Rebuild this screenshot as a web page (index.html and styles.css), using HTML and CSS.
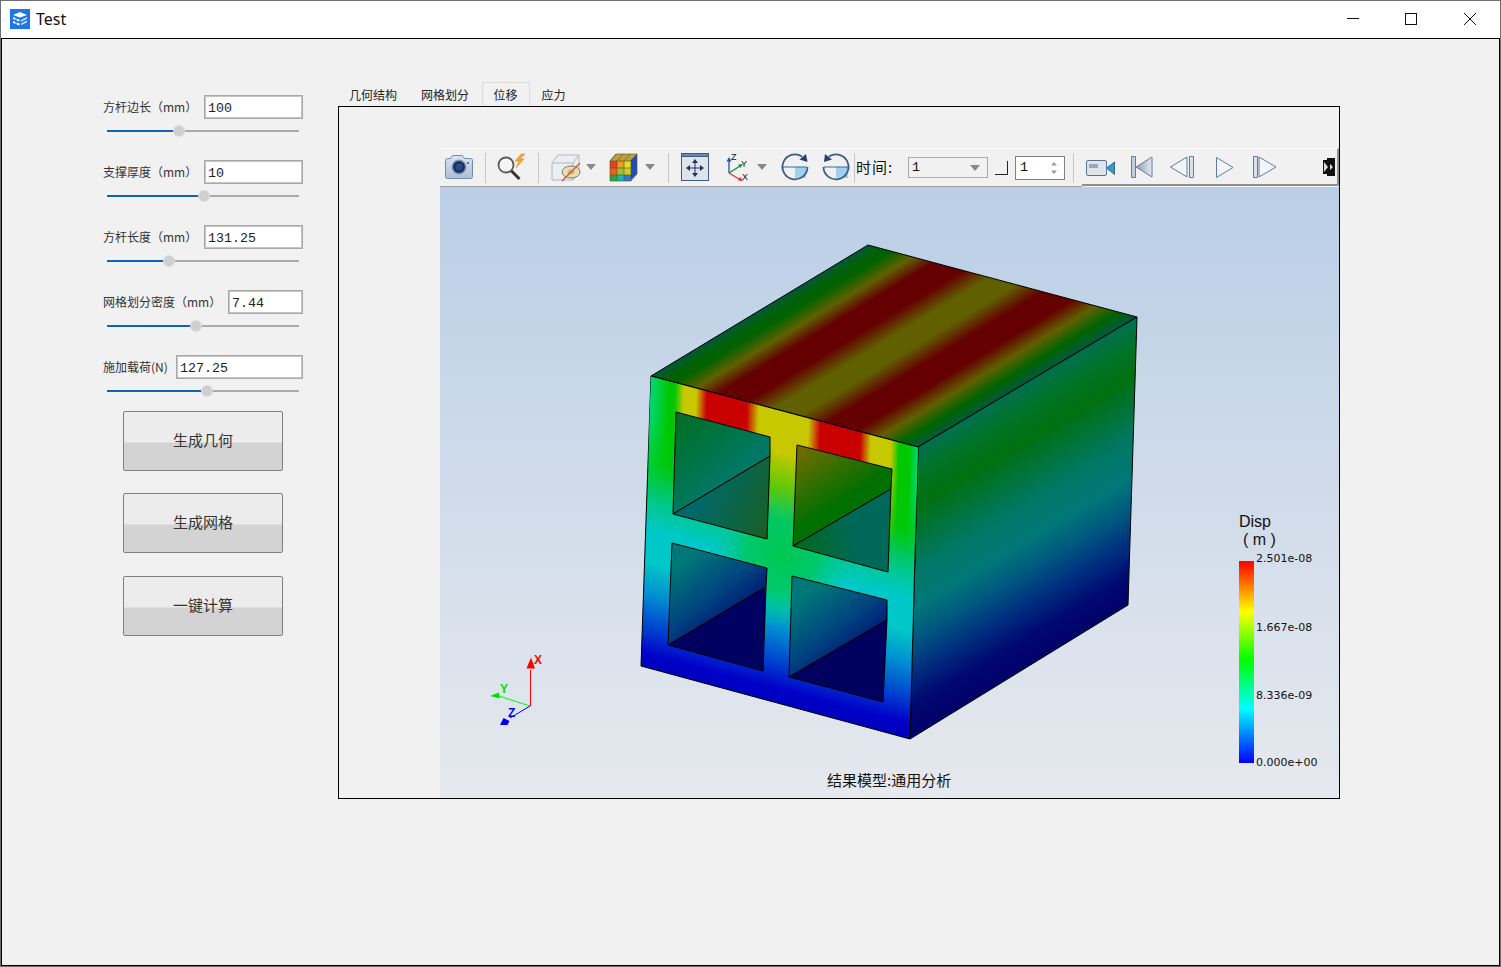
FILE: index.html
```html
<!DOCTYPE html>
<html lang="zh">
<head>
<meta charset="utf-8">
<title>Test</title>
<link rel="stylesheet" href="styles.css">
</head>
<body>
<div class="window">
  <header class="titlebar">
    <svg class="app-icon" width="20" height="20" viewBox="0 0 20 20">
      <rect width="20" height="20" fill="#1c78e6"/>
      <path d="M3 6l7-3 7 3-7 2.500z" fill="#fff"/>
      <path d="M3 8l2.500 1v2L3 10zM3 12l2.500 1v2L3 14zM6.500 9.500l3 1v2l-3-1zM6.500 13.500l3 1v2l-3-1z" fill="#fff"/>
      <path d="M11 11l6-3v1.800l-6 3zM11 14.500l6-3v1.800l-6 3z" fill="#cfe3fb"/>
    </svg>
    <span class="app-title">Test</span>
    <div class="win-controls">
      <svg width="171" height="37" viewBox="1329 1 171 37" fill="none" stroke="#111" stroke-width="1">
        <path d="M1347 18.500h12"/>
        <rect x="1405.500" y="13.500" width="11" height="11"/>
        <path d="M1464 13l12 12M1476 13l-12 12"/>
      </svg>
    </div>
  </header>
  <div class="client">
    <aside class="side">
      <div class="param">
        <div class="field"><label class="lbl lbl-m">方杆边长（mm）</label><input class="num" value="100"></div>
        <div class="slider"><div class="fill" style="width:72px"><span class="knob"></span></div></div>
      </div>
      <div class="param">
        <div class="field"><label class="lbl lbl-m">支撑厚度（mm）</label><input class="num" value="10"></div>
        <div class="slider"><div class="fill" style="width:97px"><span class="knob"></span></div></div>
      </div>
      <div class="param">
        <div class="field"><label class="lbl lbl-m">方杆长度（mm）</label><input class="num" value="131.25"></div>
        <div class="slider"><div class="fill" style="width:62px"><span class="knob"></span></div></div>
      </div>
      <div class="param">
        <div class="field"><label class="lbl lbl-l">网格划分密度（mm）</label><input class="num" value="7.44"></div>
        <div class="slider"><div class="fill" style="width:89px"><span class="knob"></span></div></div>
      </div>
      <div class="param param-last">
        <div class="field"><label class="lbl lbl-s">施加载荷(N)</label><input class="num" value="127.25"></div>
        <div class="slider"><div class="fill" style="width:100px"><span class="knob"></span></div></div>
      </div>
      <div class="actions">
        <button class="act">生成几何</button>
        <button class="act">生成网格</button>
        <button class="act act-last">一键计算</button>
      </div>
    </aside>
    <main class="main">
      <nav class="tabs">
        <span class="tab">几何结构</span>
        <span class="tab">网格划分</span>
        <span class="tab tab-on">位移</span>
        <span class="tab">应力</span>
      </nav>
      <section class="pane">
        <div class="toolbar">
          <div class="tb-main">
            <svg width="45" height="37" viewBox="440 149 45 37">
              <defs><linearGradient id="camb" x1="0" y1="0" x2="0" y2="1"><stop offset="0" stop-color="#dbe4ef"/><stop offset="1" stop-color="#aebfd4"/></linearGradient></defs>
              <path d="M445.500 160.500q0-2 2-2h3l2-3h10l2 3h6q2 0 2 2v16q0 2-2 2h-23q-2 0-2-2z" fill="url(#camb)" stroke="#6f8bad"/>
              <circle cx="459" cy="167" r="7.500" fill="#7d97b7"/>
              <circle cx="459" cy="167" r="6" fill="#1b2f5c"/>
              <circle cx="459" cy="167" r="3.500" fill="#2a4a85"/>
              <circle cx="468" cy="163" r="1" fill="#35507a"/>
            </svg>
            <i class="sep"></i>
            <svg width="52" height="37" viewBox="486 149 52 37">
              <circle cx="506" cy="165" r="7.500" fill="#f4f4f4" stroke="#5a5a5a" stroke-width="1.800"/>
              <path d="M511.500 171l8 8" stroke="#333" stroke-width="3"/>
              <path d="M521 154l-6 7h4l-3 7 8-9h-4l5-5z" fill="#f0a63a" stroke="#d98a20" stroke-width=".5"/>
            </svg>
            <i class="sep"></i>
            <svg width="62" height="37" viewBox="539 149 62 37">
              <path d="M552 163l6-8h21v17l-6 8h-21z" fill="#eceef1" stroke="#b3b6ba"/>
              <path d="M552 163h21l6-8M573 163v17" fill="none" stroke="#b3b6ba"/>
              <ellipse cx="571" cy="172" rx="9" ry="6" fill="#e8dfae" stroke="#777"/>
              <ellipse cx="571" cy="172" rx="3.500" ry="2.500" fill="#c6b978"/>
              <path d="M562 181l18-18" stroke="#d8552b" stroke-width="1.200"/>
              <path d="M586 164h10l-5 6z" fill="#888"/>
            </svg>
            <svg width="67" height="37" viewBox="601 149 67 37">
              <path d="M610 161l6-7h21l-6 7z" fill="#b7a23e"/>
              <path d="M630 161l7-7v20l-7 7z" fill="#1f4fb5"/>
              <rect x="610" y="161" width="7" height="7" fill="#e34222"/>
              <rect x="617" y="161" width="7" height="7" fill="#f09a1e"/>
              <rect x="624" y="161" width="7" height="7" fill="#e8d82e"/>
              <rect x="610" y="168" width="7" height="7" fill="#e8621f"/>
              <rect x="617" y="168" width="7" height="7" fill="#8cc63a"/>
              <rect x="624" y="168" width="7" height="7" fill="#c8d030"/>
              <rect x="610" y="175" width="7" height="6" fill="#25a650"/>
              <rect x="617" y="175" width="7" height="6" fill="#20b4b8"/>
              <rect x="624" y="175" width="7" height="6" fill="#2b78d8"/>
              <path d="M610 161h21v20h-21zM617 161v20M624 161v20M610 168h21M610 175h21M616 154l-6 7M623 154l-6 7M630 154l-6 7M610 161l6-7h21l-6 7M637 154v20l-6 7" fill="none" stroke="#5b4e1c" stroke-width=".6"/>
              <path d="M645 164h10l-5 6z" fill="#888"/>
            </svg>
            <i class="sep"></i>
            <svg width="101" height="37" viewBox="669 149 101 37">
              <rect x="681.500" y="153.500" width="27" height="27" fill="#dfe3ea" stroke="#3f5c86"/>
              <rect x="681.500" y="153.500" width="27" height="3" fill="#6f86a8" stroke="#3f5c86"/>
              <path d="M695 160v16M687 168h16" stroke="#1f3560" stroke-width="1"/>
              <path d="M695 159l-3 4h6zM695 177l-3-4h6zM686 168l4-3v6zM704 168l-4-3v6z" fill="#1f3560"/>
              <path d="M729 173v-13" stroke="#2a4ea8" stroke-width="1.300"/><path d="M729 157l-2.500 4.500h5z" fill="#2a4ea8"/>
              <path d="M729 173l11-7" stroke="#1e8a3c" stroke-width="1.300"/><path d="M743 164l-5 .5 2.300 3.600z" fill="#1e8a3c"/>
              <path d="M729 173l11 6.500" stroke="#e03030" stroke-width="1.300"/><path d="M743 181l-5-.5 2.300-3.600z" fill="#e03030"/>
              <text class="ax" x="731" y="160">Z</text><text class="ax" x="741" y="167">Y</text><text class="ax" x="742" y="180">X</text>
              <path d="M757 164h10l-5 6z" fill="#888"/>
            </svg>
            <svg width="45" height="37" viewBox="770 149 45 37">
              <rect x="795" y="167" width="11" height="11" fill="#9fd0ee"/>
              <path d="M783 167h24" stroke="#2a6fa8"/>
              <path d="M802 156.500a12.500 12.500 0 1 0 5.500 10.500" fill="none" stroke="#3c5a84" stroke-width="1.800"/>
              <path d="M806 154l1.500 8-8-2.500z" fill="#24406e"/>
            </svg>
            <svg width="39" height="37" viewBox="815 149 39 37">
              <rect x="836" y="167" width="12" height="11" fill="#9fd0ee"/>
              <path d="M824 167h24" stroke="#2a6fa8"/>
              <path d="M829 156.500a12.500 12.500 0 1 1-5.500 10.500" fill="none" stroke="#3c5a84" stroke-width="1.800"/>
              <path d="M825 154l-1 8 8-2.500z" fill="#24406e"/>
            </svg>
            <i class="sep"></i>
            <span class="time-lbl">时间:</span>
            <div class="combo"><span>1</span><svg width="10" height="6" viewBox="0 0 10 6"><path d="M0 0h10l-5 6z" fill="#888"/></svg></div>
            <svg class="corner" width="13" height="15" viewBox="0 0 13 15"><path d="M0 14.500h12.500V1" fill="none" stroke="#222"/></svg>
            <div class="spin"><span>1</span><svg width="8" height="14" viewBox="0 0 8 14"><path d="M4 1l3 3.500H1zM4 13l3-3.500H1z" fill="#9a9a9a"/></svg></div>
            <i class="sep sep-end"></i>
          </div>
          <div class="tb-anim">
            <svg width="200" height="36" viewBox="1083 149 200 36">
              <defs><linearGradient id="nav" x1="0" y1="0" x2="1" y2="0"><stop offset="0" stop-color="#8e9cb0"/><stop offset="1" stop-color="#e6eaf0"/></linearGradient></defs>
              <rect x="1087.500" y="160.500" width="20" height="15" rx="1.500" fill="#dfe4ea" stroke="#56729b"/>
              <rect x="1090" y="164" width="9" height="4" fill="#9aa6b5"/>
              <path d="M1107.500 168l8-6v12.500z" fill="#2f9fd0" stroke="#41628f"/>
              <path d="M1132.500 156.500h4v21h-4z" fill="#c5cfdc" stroke="#5f7ca6"/>
              <path d="M1153 157v20l-16-10z" fill="url(#nav)" stroke="#5f7ca6"/>
              <path d="M1188 157v20l-16.500-10z" fill="#f2f4f7" stroke="#5f7ca6"/>
              <path d="M1190.500 156.500h4v21h-4z" fill="#dbe1e9" stroke="#5f7ca6"/>
              <path d="M1217.500 157.500v20l16.500-10z" fill="#f2f4f7" stroke="#5f7ca6"/>
              <path d="M1254.500 156.500h4v21h-4z" fill="#dbe1e9" stroke="#5f7ca6"/>
              <path d="M1260 157v20l17-10z" fill="#f2f4f7" stroke="#5f7ca6"/>
            </svg>
            <svg class="more" width="12" height="18" viewBox="0 0 12 18">
              <path d="M0 2h4V0h8v18H4v-2H0z" fill="#111"/>
              <path d="M1 4l4 5-4 5zM7 6l3 3-3 3z" fill="#ddd"/>
            </svg>
          </div>
        </div>
        <div class="view">
          <svg class="scene" width="899" height="611" viewBox="440 187 899 611">
            <defs>
              <linearGradient id="topG" gradientUnits="userSpaceOnUse" x1="651" y1="376" x2="754" y2="546">
                <stop offset="0" stop-color="#005a38"/><stop offset=".06" stop-color="#006200"/><stop offset=".09" stop-color="#006200"/>
                <stop offset=".17" stop-color="#606000"/><stop offset=".25" stop-color="#640000"/><stop offset=".36" stop-color="#640000"/>
                <stop offset=".46" stop-color="#606000"/><stop offset=".56" stop-color="#606000"/><stop offset=".66" stop-color="#640000"/>
                <stop offset=".77" stop-color="#640000"/><stop offset=".86" stop-color="#606000"/><stop offset=".94" stop-color="#006400"/><stop offset="1" stop-color="#005a38"/>
              </linearGradient>
              <linearGradient id="frontBase" gradientUnits="userSpaceOnUse" x1="651" y1="376" x2="579" y2="648">
                <stop offset="0" stop-color="#00c800"/><stop offset=".29" stop-color="#00c810"/><stop offset=".44" stop-color="#00c890"/>
                <stop offset=".53" stop-color="#00c8c8"/><stop offset=".64" stop-color="#00c8c8"/><stop offset=".75" stop-color="#0090d0"/>
                <stop offset=".87" stop-color="#0040d0"/><stop offset=".96" stop-color="#0000c8"/><stop offset="1" stop-color="#0000c0"/>
              </linearGradient>
              <linearGradient id="band" gradientUnits="userSpaceOnUse" x1="651" y1="376" x2="920" y2="385">
                <stop offset="0" stop-color="#00d878"/><stop offset=".07" stop-color="#00c800"/><stop offset=".09" stop-color="#00c800"/>
                <stop offset=".125" stop-color="#c8c800"/><stop offset=".17" stop-color="#c8c800"/><stop offset=".21" stop-color="#c80000"/>
                <stop offset=".36" stop-color="#c80000"/><stop offset=".405" stop-color="#c8c800"/><stop offset=".59" stop-color="#c8c800"/>
                <stop offset=".635" stop-color="#c80000"/><stop offset=".785" stop-color="#c80000"/><stop offset=".825" stop-color="#c8c800"/>
                <stop offset=".9" stop-color="#c8c800"/><stop offset=".93" stop-color="#00c800"/><stop offset=".97" stop-color="#00c800"/><stop offset="1" stop-color="#00d878"/>
              </linearGradient>
              <linearGradient id="bandFade" gradientUnits="userSpaceOnUse" x1="651" y1="376" x2="579" y2="648">
                <stop offset="0" stop-color="#fff"/><stop offset=".14" stop-color="#fff"/><stop offset=".38" stop-color="#000"/>
              </linearGradient>
              <mask id="bandMask" maskUnits="userSpaceOnUse" x="440" y="187" width="899" height="611">
                <rect x="440" y="187" width="899" height="611" fill="url(#bandFade)"/>
              </mask>
              <radialGradient id="cross" gradientUnits="userSpaceOnUse" cx="782" cy="556" r="72">
                <stop offset="0" stop-color="#00c850" stop-opacity="1"/><stop offset=".5" stop-color="#00c860" stop-opacity=".85"/><stop offset="1" stop-color="#00c8a0" stop-opacity="0"/>
              </radialGradient>
              <linearGradient id="rightG" gradientUnits="userSpaceOnUse" x1="918" y1="447" x2="1044" y2="659">
                <stop offset="0" stop-color="#007050"/><stop offset=".09" stop-color="#007428"/><stop offset=".2" stop-color="#007010"/>
                <stop offset=".43" stop-color="#007868"/><stop offset=".55" stop-color="#007878"/><stop offset=".66" stop-color="#005880"/>
                <stop offset=".77" stop-color="#003080"/><stop offset=".89" stop-color="#000870"/><stop offset="1" stop-color="#000068"/>
              </linearGradient>
              <linearGradient id="h1" gradientUnits="userSpaceOnUse" x1="690" y1="420" x2="750" y2="490"><stop offset="0" stop-color="#00702a"/><stop offset="1" stop-color="#007a78"/></linearGradient>
              <linearGradient id="h2" gradientUnits="userSpaceOnUse" x1="700" y1="500" x2="770" y2="530"><stop offset="0" stop-color="#006868"/><stop offset="1" stop-color="#1a6024"/></linearGradient>
              <linearGradient id="h3" gradientUnits="userSpaceOnUse" x1="800" y1="450" x2="835" y2="505"><stop offset="0" stop-color="#706c00"/><stop offset="1" stop-color="#007000"/></linearGradient>
              <linearGradient id="h4" gradientUnits="userSpaceOnUse" x1="800" y1="545" x2="855" y2="535"><stop offset="0" stop-color="#006a20"/><stop offset="1" stop-color="#006858"/></linearGradient>
              <linearGradient id="h5" gradientUnits="userSpaceOnUse" x1="685" y1="560" x2="735" y2="625"><stop offset="0" stop-color="#007878"/><stop offset=".55" stop-color="#004480"/><stop offset="1" stop-color="#000f70"/></linearGradient>
              <linearGradient id="h6" gradientUnits="userSpaceOnUse" x1="805" y1="595" x2="855" y2="660"><stop offset="0" stop-color="#007878"/><stop offset=".55" stop-color="#004480"/><stop offset="1" stop-color="#000f70"/></linearGradient>
              <linearGradient id="ramp" x1="0" y1="0" x2="0" y2="1">
                <stop offset="0" stop-color="#ff0000"/><stop offset=".25" stop-color="#ffff00"/><stop offset=".49" stop-color="#00ff00"/><stop offset=".73" stop-color="#00ffff"/><stop offset="1" stop-color="#0000ff"/>
              </linearGradient>
            </defs>
            <g stroke="#000" stroke-width="1" stroke-linejoin="round">
              <path d="M651 376L868 245L1137 317L918 447z" fill="url(#topG)"/>
              <path d="M918 447L1137 317L1128 605L910 739z" fill="url(#rightG)"/>
              <path d="M651 376L918 447L910 739L641 666z" fill="url(#frontBase)"/>
            </g>
            <path d="M651 376L918 447L910 739L641 666z" fill="url(#cross)"/>
            <path d="M651 376L918 447L910 739L641 666z" fill="url(#band)" mask="url(#bandMask)"/>
            <g stroke="#000" stroke-width="1" stroke-linejoin="round">
              <path d="M651 376L918 447" fill="none"/>
              <path d="M676 412L770 437L770 456L673 514z" fill="url(#h1)"/>
              <path d="M673 514L770 456L767 539z" fill="url(#h2)"/>
              <path d="M797 445L892 469L891 489L793 546z" fill="url(#h3)"/>
              <path d="M793 546L891 489L888 572z" fill="url(#h4)"/>
              <path d="M672 543L767 568L766 587L668 645z" fill="url(#h5)"/>
              <path d="M668 645L766 587L763 671z" fill="#000060"/>
              <path d="M792 576L887 600L887 620L789 677z" fill="url(#h6)"/>
              <path d="M789 677L887 620L883 702z" fill="#00005e"/>
            </g>
            <path d="M530.500 706v-36" stroke="#f00" fill="none"/>
            <path d="M531 657.500l-4.500 11h8.500z" fill="#f00"/>
            <path d="M530 706l-31-10" stroke="#00ff00" fill="none"/>
            <path d="M490 696l9-3.500 .5 6z" fill="#00e000"/>
            <path d="M530 706l-20 12" stroke="#0000f0" fill="none"/>
            <path d="M500 725l3.500-7 6 3-2 4z" fill="#0000f0"/>
            <text class="tri tri-x" x="534" y="664">X</text>
            <text class="tri tri-y" x="500" y="693">Y</text>
            <text class="tri tri-z" x="508" y="717">Z</text>
            <text class="leg-t" x="1239" y="527">Disp</text>
            <text class="leg-t" x="1243" y="545">( m )</text>
            <rect x="1239" y="561" width="15" height="202" fill="url(#ramp)"/>
            <text class="leg-v" x="1256" y="562">2.501e-08</text>
            <text class="leg-v" x="1256" y="631">1.667e-08</text>
            <text class="leg-v" x="1256" y="699">8.336e-09</text>
            <text class="leg-v" x="1256" y="766">0.000e+00</text>
            <text class="cap" x="827" y="786">结果模型:通用分析</text>
          </svg>
        </div>
      </section>
    </main>
  </div>
</div>
</body>
</html>
```
FILE: styles.css
```css
* { box-sizing: border-box; }
html, body { margin: 0; padding: 0; }
body { width: 1501px; height: 967px; overflow: hidden; background: #f0f0f0; font-family: "Noto Sans CJK SC", "Noto Sans", sans-serif; }
.window { width: 1501px; height: 967px; border: 1px solid #6e6e6e; display: flex; flex-direction: column; }
.titlebar { height: 37px; background: #fff; display: flex; align-items: center; padding-left: 9px; flex: none; }
.app-icon { display: block; margin-top: -1px; }
.app-title { margin-left: 6px; font: 16px "Noto Sans", sans-serif; color: #111; margin-top: -1px; }
.win-controls { margin-left: auto; height: 37px; }
.win-controls svg { display: block; }
.client { flex: 1; display: flex; border: 1px solid #000; background: #f1f1f1; min-height: 0; }

.side { width: 336px; flex: none; padding: 56px 0 0 100px; }
.param { height: 65px; width: 201px; }
.param-last { height: 56px; }
.field { display: flex; height: 24px; align-items: center; }
.lbl { flex: none; font-size: 12px; color: #333; white-space: nowrap; line-height: 24px; padding-left: 1px; }
.lbl-m { width: 102px; }
.lbl-l { width: 126px; }
.lbl-s { width: 74px; }
.num { flex: 1; min-width: 0; height: 24px; border: 1px solid #a9a9a9; outline: 1px solid #c4c4c4; outline-offset: -2px; background: #fff; padding: 2px 0 0 3px; font: 13.33px "Liberation Mono", monospace; color: #222; }
.slider { margin: 11px 0 0 5px; width: 192px; height: 2px; background: #aaa; }
.fill { position: relative; height: 2px; background: #0f62b4; }
.knob { position: absolute; right: -5px; top: -4px; width: 10px; height: 10px; border-radius: 50%; background: #cfcfcf; box-shadow: 0 0 0 1px #dcdcdc; }
.actions { display: flex; flex-direction: column; align-items: flex-start; padding-left: 21px; }
.act { width: 160px; height: 60px; margin-bottom: 22px; padding: 0 0 4px; border: 1px solid #808080; border-radius: 2px; font: 15px "Noto Sans CJK SC", sans-serif; color: #333; background: linear-gradient(to bottom, #ececec 0, #ececec 30px, #d3d3d3 31px, #d3d3d3 100%); }
.act:nth-child(2) { margin-bottom: 23px; }

.main { flex: 1; padding-top: 43px; min-width: 0; }
.tabs { display: flex; height: 24px; margin-left: -1px; font-size: 12px; color: #222; }
.tab { padding: 0 12px; line-height: 26px; height: 24px; white-space: nowrap; }
.tab-on { padding: 0 11px; margin-left: .5px; border: 1px solid #dadada; border-bottom: 0; line-height: 24px; }
.pane { width: 1002px; height: 693px; border: 1px solid #000; padding: 41px 0 0 101px; }

.toolbar { display: flex; height: 39px; width: 899px; }
.tb-main { width: 642px; display: flex; align-items: center; height: 39px; border-top: 1px solid #fff; border-bottom: 1px solid #a0a0a0; }
.tb-main > svg { flex: none; display: block; }
.sep { flex: none; width: 1px; height: 30px; background: #c8c8c8; }
.time-lbl { width: 53px; padding: 0 0 3px 1px; font-size: 15px; letter-spacing: 1px; color: #111; white-space: nowrap; }
.combo { width: 80px; height: 21px; border: 1px solid #aaa; display: flex; align-items: center; justify-content: space-between; padding: 0 7px 0 3px; font: 13.33px "Liberation Mono", monospace; color: #111; flex: none; }
.corner { margin: 0 7px 0 7px; flex: none; }
.spin { width: 50px; height: 24px; border: 1px solid #808080; background: #fff; display: flex; align-items: center; justify-content: space-between; padding: 0 6px 0 4px; font: 13.33px "Liberation Mono", monospace; color: #111; flex: none; }
.sep-end { margin-left: 8px; }
.tb-anim { width: 257px; height: 38px; display: flex; align-items: center; border-top: 1px solid #fff; border-bottom: 2px solid #8f8f8f; border-right: 2px solid #8f8f8f; }
.tb-anim > svg { display: block; flex: none; }
.more { margin-left: 41px; }
.view { width: 899px; height: 611px; background: linear-gradient(to bottom, #bacee6 0, #e6e9ee 100%); }
.scene { display: block; }
.ax { font: 9px "Liberation Sans", sans-serif; fill: #111; }
.tri { font: bold 12px "Liberation Sans", sans-serif; }
.tri-x { fill: #f00; }
.tri-y { fill: #00e000; }
.tri-z { fill: #0000f0; }
.leg-t { font: 16px "Liberation Sans", sans-serif; fill: #111; }
.leg-v { font: 11px "DejaVu Sans", sans-serif; fill: #111; }
.cap { font: 15px "Noto Sans CJK SC", sans-serif; fill: #111; }
```
